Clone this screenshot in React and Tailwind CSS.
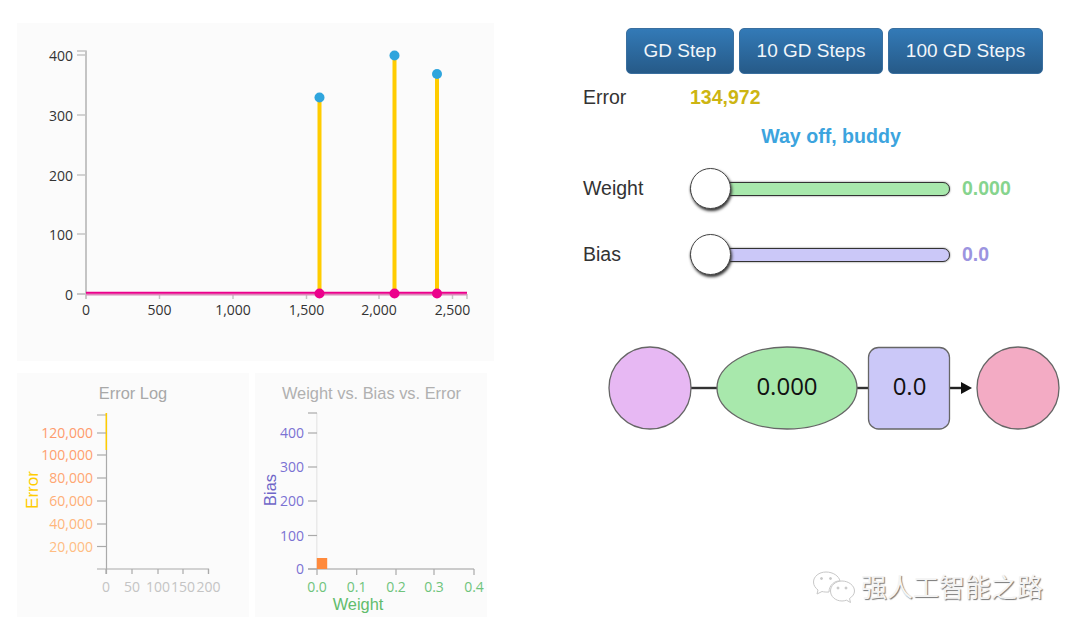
import React from "react";

const segoe = '"Open Sans", "Noto Sans", sans-serif';
const arial = '"Liberation Sans", Arial, sans-serif';

const MainChart = () => {
  const yTicks = [
    ["400", 55],
    ["300", 115],
    ["200", 175],
    ["100", 234],
    ["0", 294],
  ];
  const xTicks = [
    ["0", 86],
    ["500", 159.5],
    ["1,000", 233],
    ["1,500", 306.5],
    ["2,000", 379],
    ["2,500", 452.5],
  ];
  const stems = [
    [319.5, 97.5],
    [394.5, 55.5],
    [437, 74],
  ];
  return (
    <svg viewBox="17 23 477 338" className="block w-[477px] h-[338px]" fontFamily={segoe} fontSize="14">
      <path d="M77 51H86V294H77M86 294V299M467 294V299" fill="none" stroke="#c4c4c4" strokeWidth="1.5" />
      <line x1="86" y1="51" x2="86" y2="294" stroke="#c4c4c4" strokeWidth="2" />
      {yTicks.map(([t, y]) => (
        <g key={t}>
          <line x1="77" y1={y} x2="86" y2={y} stroke="#c4c4c4" strokeWidth="1.5" />
          <text x="73" y={y + 6} textAnchor="end" fill="#333">{t}</text>
        </g>
      ))}
      {xTicks.map(([t, x]) => (
        <g key={t}>
          <line x1={x} y1="294" x2={x} y2="299" stroke="#c4c4c4" strokeWidth="1.5" />
          <text x={x} y="315" textAnchor="middle" fill="#333">{t}</text>
        </g>
      ))}
      <line x1="86" y1="294.5" x2="467" y2="294.5" stroke="#d98ab8" strokeWidth="2" />
      <line x1="86" y1="292.8" x2="467" y2="292.8" stroke="#ec008c" strokeWidth="2" />
      {stems.map(([x, y]) => (
        <g key={x}>
          <line x1={x} y1={y} x2={x} y2="293" stroke="#ffcc00" strokeWidth="4" />
          <circle cx={x} cy={y} r="5" fill="#2fa5dd" />
          <circle cx={x} cy="293.5" r="5" fill="#ec008c" />
        </g>
      ))}
    </svg>
  );
};

const ErrorLog = () => {
  const yTicks = [
    ["120,000", 433, "#ff9a6c"],
    ["100,000", 455, "#ff9f6e"],
    ["80,000", 478, "#ffa672"],
    ["60,000", 501, "#ffae76"],
    ["40,000", 524, "#ffb67c"],
    ["20,000", 546.5, "#ffbd82"],
  ];
  const xTicks = [
    ["0", 106],
    ["50", 132],
    ["100", 158],
    ["150", 183],
    ["200", 208.5],
  ];
  return (
    <svg viewBox="17 373 232 244" className="block w-[232px] h-[244px]" fontFamily={segoe} fontSize="14">
      <text x="133" y="398.5" textAnchor="middle" fontFamily={arial} fontSize="16.4" fill="#a8a8a8">Error Log</text>
      <path d="M97 415H106.5M106.5 413V574M97 569H208.5V574" fill="none" stroke="#aaa" strokeWidth="1.2" />
      <line x1="106.3" y1="413" x2="106.3" y2="450" stroke="#ffcc00" strokeWidth="1.5" />
      {yTicks.map(([t, y, c]) => (
        <g key={t}>
          <line x1="97" y1={y} x2="106" y2={y} stroke="#aaa" strokeWidth="1.2" />
          <text x="93" y={y + 5} textAnchor="end" fill={c}>{t}</text>
        </g>
      ))}
      {xTicks.map(([t, x]) => (
        <g key={t}>
          <line x1={x} y1="569" x2={x} y2="574" stroke="#aaa" strokeWidth="1.2" />
          <text x={x} y="592" textAnchor="middle" fill="#c4c4c4">{t}</text>
        </g>
      ))}
      <text x="0" y="0" transform="translate(37.5 490) rotate(-90)" textAnchor="middle" fontFamily={arial} fontSize="17" fill="#ffcc00">Error</text>
    </svg>
  );
};

const WeightBias = () => {
  const yTicks = [
    ["400", 433],
    ["300", 467],
    ["200", 501],
    ["100", 535.5],
    ["0", 569],
  ];
  const xTicks = [
    ["0.0", 317],
    ["0.1", 356.7],
    ["0.2", 396],
    ["0.3", 434],
    ["0.4", 474],
  ];
  return (
    <svg viewBox="255 373 232 244" className="block w-[232px] h-[244px]" fontFamily={segoe} fontSize="14">
      <text x="371.5" y="398.5" textAnchor="middle" fontFamily={arial} fontSize="16.4" fill="#b0b0b0">Weight vs. Bias vs. Error</text>
      <line x1="316.8" y1="413" x2="316.8" y2="569" stroke="#e6e6e6" strokeWidth="1.2" />
      <line x1="308" y1="413" x2="317" y2="413" stroke="#aaa" strokeWidth="1.2" />
      <line x1="308" y1="569" x2="474" y2="569" stroke="#bbb" strokeWidth="1.4" />
      {yTicks.map(([t, y]) => (
        <g key={t}>
          <line x1="308" y1={y} x2="317" y2={y} stroke="#aaa" strokeWidth="1.2" />
          <text x="304" y={y + 5} textAnchor="end" fill="#7b72d3">{t}</text>
        </g>
      ))}
      {xTicks.map(([t, x]) => (
        <g key={t}>
          <line x1={x} y1="569" x2={x} y2="575" stroke="#aaa" strokeWidth="1.2" />
          <text x={x} y="592" textAnchor="middle" fill="#6fc47c">{t}</text>
        </g>
      ))}
      <rect x="316.8" y="558" width="10.4" height="11" fill="#ff8a3c" />
      <text x="358" y="609.5" textAnchor="middle" fontFamily={arial} fontSize="16.4" fill="#62bd6c">Weight</text>
      <text x="0" y="0" transform="translate(275.5 490) rotate(-90)" textAnchor="middle" fontFamily={arial} fontSize="16.4" fill="#6f66c8">Bias</text>
    </svg>
  );
};

const GdButton = ({ className, children }) => (
  <button className={`h-[46px] rounded-[5px] border border-[#3a6f9f] bg-gradient-to-b from-[#337ab7] to-[#265a88] text-[19px] text-[#f2f6fa] ${className}`}>
    {children}
  </button>
);

const Slider = ({ label, value, trackClass, valueClass }) => (
  <div className="flex items-center h-[42px]">
    <span className="w-[108px] text-[19.5px] text-[#333] pl-[1px]">{label}</span>
    <div className="relative w-[260px] h-[14px]">
      <div className={`h-full rounded-full border-[1.5px] border-[#333] shadow-[0_0_2px_#666] ${trackClass}`} />
      <div className="absolute left-0 top-[-14px] w-[41px] h-[41px] rounded-full bg-white border border-[#444] shadow-[1px_2px_3px_#333]" />
    </div>
    <span className={`ml-[12px] text-[19.5px] font-bold ${valueClass}`}>{value}</span>
  </div>
);

const Network = () => (
  <svg viewBox="600 340 470 96" className="block w-[470px] h-[96px]" fontFamily={segoe}>
    <line x1="691" y1="388" x2="718" y2="388" stroke="#333" strokeWidth="2.4" />
    <line x1="857" y1="388" x2="869" y2="388" stroke="#333" strokeWidth="2.4" />
    <line x1="950" y1="388" x2="964" y2="388" stroke="#222" strokeWidth="2.4" />
    <path d="M961 382L972 388L961 394Z" fill="#111" />
    <circle cx="650" cy="388" r="41" fill="#e7b8f3" stroke="#666" strokeWidth="1.3" />
    <ellipse cx="787" cy="388" rx="70" ry="41" fill="#a8e8ac" stroke="#666" strokeWidth="1.3" />
    <rect x="868.5" y="347.5" width="81" height="81.5" rx="10" fill="#cbc8f8" stroke="#666" strokeWidth="1.3" />
    <circle cx="1018" cy="388" r="41" fill="#f3abc4" stroke="#666" strokeWidth="1.3" />
    <text x="787" y="395" textAnchor="middle" fontSize="24" fill="#111">0.000</text>
    <text x="909.5" y="395" textAnchor="middle" fontSize="24" fill="#111">0.0</text>
  </svg>
);

const Watermark = () => (
  <div className="absolute left-[812px] top-[568px] flex items-center gap-[5px]">
    <svg viewBox="0 0 44 36" className="w-[44px] h-[36px]" fill="none" stroke="#c8c8c8" strokeWidth="1">
      <path d="M14 4C7 4 1.5 8.5 1.5 14C1.5 17.5 3.5 20 6 22L5 26L10 23.5C12 24 14 24.2 17 24C17 17 23 12.5 28 13C27 8 21 4 14 4Z" />
      <path d="M30 13C23.5 13 18.5 17.5 18.5 23C18.5 28.5 23.5 33 30 33C31.5 33 33 32.7 34.5 32.2L38.5 34.5L37.5 30.5C40.5 28.5 42.5 26 42.5 23C42.5 17.5 36.5 13 30 13Z" />
      <circle cx="9.5" cy="10.5" r="1" fill="#c8c8c8" />
      <circle cx="18.5" cy="10.5" r="1" fill="#c8c8c8" />
      <circle cx="26" cy="20" r="1" fill="#c8c8c8" />
      <circle cx="34" cy="20" r="1" fill="#c8c8c8" />
    </svg>
    <span className="text-[26px] leading-[36px] text-[#f4f4f4] [font-family:'Noto_Sans_CJK_SC',sans-serif] [text-shadow:1px_1px_1px_#777]">
      强人工智能之路
    </span>
  </div>
);

export default function App() {
  return (
    <div className="relative flex w-[1080px] h-[634px] bg-white pl-[17px] pt-[23px] overflow-hidden [font-family:'Liberation_Sans',Arial,sans-serif]">
      <div className="flex flex-col w-[477px] gap-[12px]">
        <div className="bg-[#fbfbfb]">
          <MainChart />
        </div>
        <div className="flex gap-[6px]">
          <div className="bg-[#fbfbfb]">
            <ErrorLog />
          </div>
          <div className="bg-[#fbfbfb]">
            <WeightBias />
          </div>
        </div>
      </div>

      <div className="flex flex-col w-[480px] ml-[88px] pt-[5px]">
        <div className="flex gap-[5px] pl-[44px]">
          <GdButton className="w-[108px]">GD Step</GdButton>
          <GdButton className="w-[144px]">10 GD Steps</GdButton>
          <GdButton className="w-[155px]">100 GD Steps</GdButton>
        </div>
        <div className="flex items-center h-[28px] mt-[10px]">
          <span className="w-[108px] text-[19.5px] text-[#333] pl-[1px]">Error</span>
          <span className="text-[19.5px] font-bold text-[#cdb512]">134,972</span>
        </div>
        <div className="w-[498px] text-center text-[19.6px] leading-[28px] font-bold text-[#3ca4de] mt-[10px]">
          Way off, buddy
        </div>
        <div className="flex flex-col gap-[24px] mt-[18px]">
          <Slider label="Weight" value="0.000" trackClass="bg-[#a8e8ac]" valueClass="text-[#86d48e]" />
          <Slider label="Bias" value="0.0" trackClass="bg-[#cbc8f8]" valueClass="text-[#9c94e0]" />
        </div>
        <div className="mt-[64px] ml-[18px]">
          <Network />
        </div>
      </div>

      <Watermark />
    </div>
  );
}
